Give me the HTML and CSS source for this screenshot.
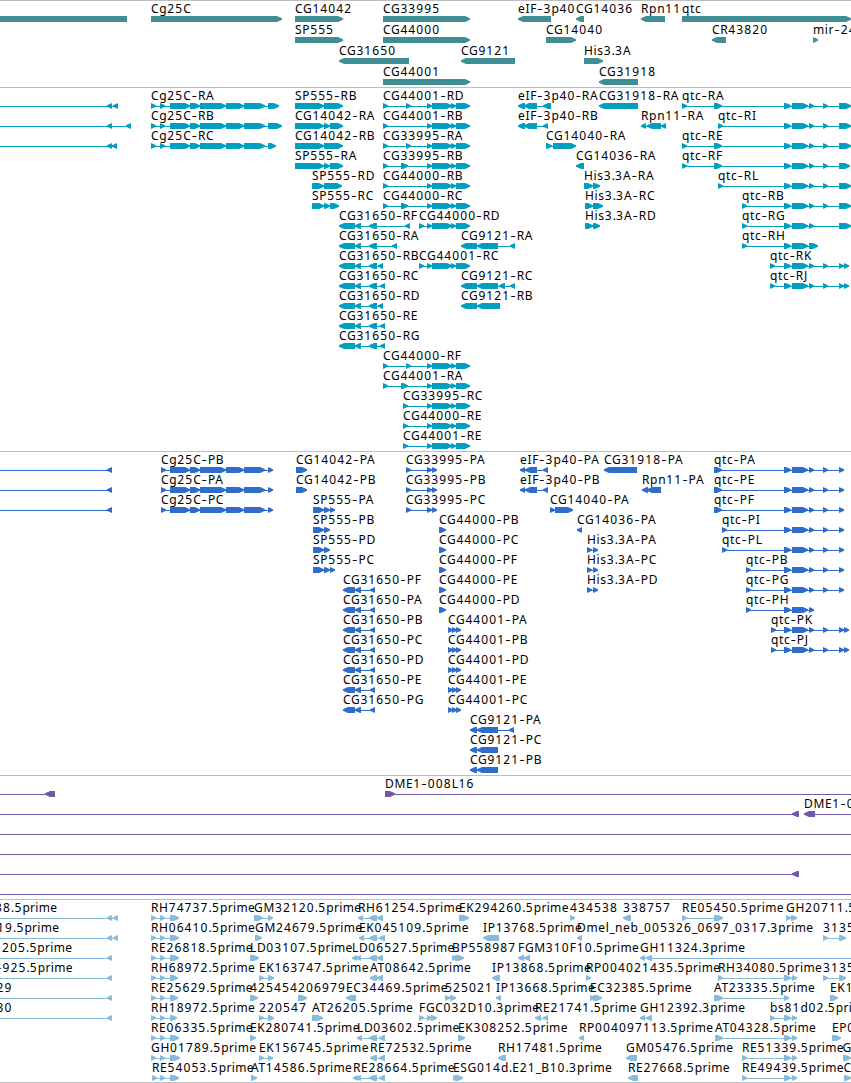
FILE: index.html
```html
<!DOCTYPE html>
<html lang="en">
<head>
    <meta charset="UTF-8">
    <meta name="viewport" content="width=device-width, initial-scale=1.0">
    <title>Genome tracks</title>
    <link rel="stylesheet" href="styles.css">
</head>
<body>
    <main class="browser">
        <section class="track genes" id="genes"></section>
        <section class="track transcripts" id="transcripts"></section>
        <section class="track proteins" id="proteins"></section>
        <section class="track bacs" id="bacs"></section>
        <section class="track ests" id="ests"></section>
    </main>
    <script src="tracks.js"></script>
</body>
</html>
```
FILE: styles.css
```css
body {
    margin: 0;
    background-color: #fff;
    overflow: hidden;
}
.browser {
    display: flex;
    flex-direction: column;
    border-bottom: 1px solid #bdbdbd;
}
.track {
    border-top: 1px solid #bdbdbd;
    box-sizing: border-box;
    overflow: hidden;
}
.track svg {
    display: block;
    width: 100%;
    height: 100%;
}
.genes {
    height: 87px;
    color: #3f8e94;
}
.transcripts {
    height: 364px;
    color: #009fc0;
}
.proteins {
    height: 324px;
    color: #306ccb;
}
.bacs {
    height: 124px;
    color: #7459a8;
}
.ests {
    height: 183px;
    color: #86bbdc;
}
.exon,
.intron {
    fill: currentColor;
}
.label {
    font-family: "Noto Sans", sans-serif;
    font-size: 12px;
    letter-spacing: 0.65px;
    fill: #000;
}
.label .num {
    letter-spacing: 1.12px;
}
.label .dash {
    font-family: Inter, "Noto Sans", sans-serif;
    letter-spacing: 0.9px;
}
.label .punct {
    letter-spacing: 0.2px;
}
.label .end {
    letter-spacing: 0.32px;
}
```
FILE: tracks.js
```javascript
// feature: [lane, label, strand, exons, line span, label x]
const cgBody = ' 427:432 432:452 451:456 456:470';
const cg31650 = '339:355 355:361 369:377 ';
const cg25c = ' 170:190 190:200 200:226 226:244 244:265 ';
const qtcMid = ' 784:791 792:808 809:814 ';
const qtcEnd = qtcMid + '823:828 839:851';
const qtcProt = qtcMid + '823:828 839:844';
const qtcLast = qtcMid + '823:828 839:844 844:849';
const estQtc = ' 784:791 792:797';

const genes = [
    [0, '', '-', '-20:127'],
    [0, 'Cg25C', '+', '151:282'],
    [0, 'CG14042', '+', '295:343'],
    [0, 'CG33995', '+', '383:470'],
    [0, 'eIF-3p40', '-', '518:551'],
    [0, 'CG14036', '-', '576:584'],
    [0, 'Rpn11', '-', '641:665'],
    [0, 'qtc', '+', '682:851'],
    [1, 'SP555', '+', '295:343'],
    [1, 'CG44000', '+', '383:470'],
    [1, 'CG14040', '+', '546:576'],
    [1, 'CR43820', '-', '712:726'],
    [1, 'mir-24', '+', '813:818'],
    [2, 'CG31650', '-', '339:409'],
    [2, 'CG9121', '-', '461:515'],
    [2, 'His3.3A', '+', '584:603'],
    [3, 'CG44001', '+', '383:470'],
    [3, 'CG31918', '-', '599:638']
];

const transcripts = [
    [0, '', '-', '107:112 113:118', [0, 118]],
    [1, '', '-', '107:112 126:131', [0, 131]],
    [2, '', '-', '107:112 112:117', [0, 117]],
    [0, 'Cg25C-RA', '+', '151:156 160:165' + cg25c + '268:279'],
    [1, 'Cg25C-RB', '+', '151:156 160:165' + cg25c + '268:282'],
    [2, 'Cg25C-RC', '+', '151:156 160:165' + cg25c + '268:276'],
    [0, 'SP555-RB', '+', '295:324 324:343'],
    [1, 'CG14042-RA', '+', '295:324 324:330 330:343'],
    [2, 'CG14042-RB', '+', '295:324 324:343'],
    [3, 'SP555-RA', '+', '295:324 324:330 330:343'],
    [4, 'SP555-RD', '+', '312:324 324:342'],
    [5, 'SP555-RC', '+', '312:324 324:330 330:339'],
    [0, 'CG44001-RD', '+', '383:388 406:411' + cgBody],
    [1, 'CG44001-RB', '+', '383:388' + cgBody],
    [2, 'CG33995-RA', '+', '383:388 406:411' + cgBody],
    [3, 'CG33995-RB', '+', '383:388 401:408' + cgBody],
    [4, 'CG44000-RB', '+', '383:388' + cgBody],
    [5, 'CG44000-RC', '+', '383:388 401:408' + cgBody],
    [6, 'CG31650-RF', '-', cg31650 + '405:410'],
    [7, 'CG31650-RA', '-', cg31650 + '392:397'],
    [8, 'CG31650-RB', '-', cg31650 + '378:383'],
    [9, 'CG31650-RC', '-', cg31650 + '380:385'],
    [10, 'CG31650-RD', '-', cg31650 + '378:383'],
    [11, 'CG31650-RE', '-', cg31650 + '380:385'],
    [12, 'CG31650-RG', '-', cg31650 + '380:385'],
    [6, 'CG44000-RD', '+', '419:424' + cgBody],
    [8, 'CG44001-RC', '+', '419:424' + cgBody],
    [7, 'CG9121-RA', '-', '461:477 477:498 510:515'],
    [9, 'CG9121-RC', '-', '461:477 477:498 499:505 510:515'],
    [10, 'CG9121-RB', '-', '461:477 477:500'],
    [13, 'CG44000-RF', '+', '383:388 406:411' + cgBody],
    [14, 'CG44001-RA', '+', '383:388 401:408' + cgBody],
    [15, 'CG33995-RC', '+', '403:408' + cgBody],
    [16, 'CG44000-RE', '+', '403:408' + cgBody],
    [17, 'CG44001-RE', '+', '403:408' + cgBody],
    [0, 'eIF-3p40-RA', '-', '518:525 524:537 543:551'],
    [1, 'eIF-3p40-RB', '-', '518:525 524:537 543:548'],
    [0, 'CG31918-RA', '-', '599:638'],
    [1, 'Rpn11-RA', '-', '641:646 647:661 661:666'],
    [2, 'CG14040-RA', '+', '546:552 553:576'],
    [3, 'CG14036-RA', '-', '576:584'],
    [4, 'His3.3A-RA', '+', '584:593 593:600'],
    [5, 'His3.3A-RC', '+', '585:593 593:603'],
    [6, 'His3.3A-RD', '+', '585:593 593:600'],
    [0, 'qtc-RA', '+', '682:687 714:722' + qtcEnd],
    [1, 'qtc-RI', '+', '718:723' + qtcEnd],
    [2, 'qtc-RE', '+', '682:687 714:722' + qtcEnd],
    [3, 'qtc-RF', '+', '682:687 714:722' + qtcMid + '823:828 839:850'],
    [4, 'qtc-RL', '+', '718:723' + qtcEnd],
    [5, 'qtc-RB', '+', '742:747' + qtcEnd],
    [6, 'qtc-RG', '+', '742:747' + qtcMid + '839:851'],
    [7, 'qtc-RH', '+', '742:747 784:791 792:808 809:818'],
    [8, 'qtc-RK', '+', '770:775' + qtcLast],
    [9, 'qtc-RJ', '+', '770:775' + qtcLast]
];

const proteins = [
    [0, '', '-', '107:112', [0, 112]],
    [1, '', '-', '107:112', [0, 112]],
    [2, '', '-', '107:112', [0, 112]],
    [0, 'CG14042-PA', '+', '296:307'],
    [1, 'CG14042-PB', '+', '296:307'],
    [2, 'SP555-PA', '+', '313:324 324:330 330:335'],
    [3, 'SP555-PB', '+', '313:324 324:330'],
    [4, 'SP555-PD', '+', '313:324 324:330'],
    [5, 'SP555-PC', '+', '313:324 324:330 330:335'],
    [13, 'CG9121-PA', '-', '470:477 477:498 509:514'],
    [14, 'CG9121-PC', '-', '470:477 477:498'],
    [15, 'CG9121-PB', '-', '470:477 477:498'],
    [0, 'eIF-3p40-PA', '-', '520:525 525:537 543:548'],
    [1, 'eIF-3p40-PB', '-', '520:525 525:537 543:548'],
    [0, 'CG31918-PA', '-', '604:637'],
    [1, 'Rpn11-PA', '-', '642:648 647:661'],
    [2, 'CG14040-PA', '+', '550:555 555:573'],
    [3, 'CG14036-PA', '-', '577:582'],
    [4, 'His3.3A-PA', '+', '587:592 593:598'],
    [5, 'His3.3A-PC', '+', '587:592 593:598'],
    [6, 'His3.3A-PD', '+', '587:592 593:598'],
    [0, 'qtc-PA', '+', '714:722' + qtcProt],
    [1, 'qtc-PE', '+', '714:722' + qtcProt],
    [2, 'qtc-PF', '+', '714:722' + qtcProt],
    [3, 'qtc-PI', '+', '722:727' + qtcProt],
    [4, 'qtc-PL', '+', '722:727' + qtcProt],
    [5, 'qtc-PB', '+', '746:751' + qtcProt],
    [6, 'qtc-PG', '+', '746:751' + qtcProt],
    [7, 'qtc-PH', '+', '746:751 784:791 792:808 809:814'],
    [8, 'qtc-PK', '+', '771:776' + qtcLast],
    [9, 'qtc-PJ', '+', '771:776' + qtcLast]
];
// isoforms that share one structure
['PB', 'PA', 'PC'].forEach((p, i) => proteins.push([i, 'Cg25C-' + p, '+', '161:166' + cg25c + '268:273']));
['PA', 'PB', 'PC'].forEach((p, i) => proteins.push([i, 'CG33995-' + p, '+', '406:411 427:432 432:437']));
['PF', 'PA', 'PB', 'PC', 'PD', 'PE', 'PG'].forEach((p, i) => proteins.push([i + 6, 'CG31650-' + p, '-', '343:355 355:361 370:375']));
['PB', 'PC', 'PF', 'PE', 'PD'].forEach((p, i) => proteins.push([i + 3, 'CG44000-' + p, '+', '439:446']));
['PA', 'PB', 'PD', 'PE', 'PC'].forEach((p, i) => proteins.push([i + 8, 'CG44001-' + p, '+', '448:453 452:457 456:461']));

const bacs = [
    [0, '', '-', '45:55', [0, 55]],
    [0, 'DME1-008L16', '+', '385:395', [385, 851]],
    [1, '', '-', '792:799', [0, 799]],
    [1, 'DME1-0', '-', '804:815', [804, 851]],
    [2, '', '+', '', [0, 851]],
    [3, '', '+', '', [0, 851]],
    [4, '', '-', '792:799', [0, 799]],
    [5, '', '+', '', [0, 851]]
];

const ests = [
    [0, '38.5prime', '-', '107:112 113:118', [0, 118], -5],
    [1, '19.5prime', '-', '107:112 113:118', [0, 118], -3],
    [2, '205.5prime', '-', '107:112', [0, 112], 2],
    [3, '-925.5prime', '-', '107:112', [0, 112], -4],
    [4, '29', '-', '107:112', [0, 112], -3.5],
    [5, '30', '-', '107:112', [0, 112], -3.5],
    [0, 'RH74737.5prime', '+', '151:156 160:165 170:179'],
    [1, 'RH06410.5prime', '+', '151:156 160:165 170:179'],
    [2, 'RE26818.5prime', '+', '151:156 160:165 170:179'],
    [3, 'RH68972.5prime', '+', '151:156 160:165 170:178'],
    [4, 'RE25629.5prime', '+', '151:156 160:165 170:178'],
    [5, 'RH18972.5prime', '+', '151:156 160:165 170:177'],
    [6, 'RE06335.5prime', '+', '151:156 160:165 170:179'],
    [7, 'GH01789.5prime', '+', '151:156 160:165 170:180'],
    [8, 'RE54053.5prime', '+', '152:157 160:165 170:179'],
    [0, 'GM32120.5prime', '+', '254:263 268:273'],
    [1, 'GM24679.5prime', '+', '255:262'],
    [2, 'LD03107.5prime', '+', '250:259'],
    [3, 'EK163747.5prime', '+', '259:264 268:274'],
    [4, '425454', '+', '250:258'],
    [4, '206979', '+', '298:307'],
    [5, '220547', '+', '259:264 268:274'],
    [6, 'EK280741.5prime', '+', '250:256'],
    [7, 'EK156745.5prime', '+', '259:264 268:273'],
    [8, 'AT14586.5prime', '+', '251:257'],
    [0, 'RH61254.5prime', '-', '358:363 369:377 377:383'],
    [1, 'EK045109.5prime', '-', '359:364 369:377 379:385'],
    [2, 'LD06527.5prime', '-', '352:357 356:361 369:377 377:383'],
    [3, 'AT08642.5prime', '-', '370:377 377:383'],
    [4, 'EC34469.5prime', '-', '346:356'],
    [5, 'AT26205.5prime', '+', '312:323'],
    [6, 'LD03602.5prime', '-', '357:362 369:377 379:385'],
    [7, 'RE72532.5prime', '-', '370:377 379:385'],
    [8, 'RE28664.5prime', '-', '353:358 356:361 369:377 379:385'],
    [0, 'EK294260.5prime', '+', '459:469'],
    [1, 'IP13768.5prime', '-', '483:499'],
    [2, 'BP558987', '+', '452:457 455:464'],
    [2, 'FGM310F10.5prime', '-', '518:524 524:530'],
    [3, 'IP13868.5prime', '-', '492:500'],
    [4, '525021', '+', '445:450 450:456'],
    [4, 'IP13668.5prime', '-', '496:501'],
    [5, 'FGC032D10.3prime', '+', '419:424 427:432 431:437'],
    [5, 'RE21741.5prime', '-', '535:541 543:548'],
    [6, 'EK308252.5prime', '+', '458:465'],
    [7, 'RH17481.5prime', '-', '498:506'],
    [8, 'ESG014d.E21_B10.3prime', '+', '453:458 455:463'],
    [0, '434538', '+', '570:575'],
    [0, '338757', '-', '623:631'],
    [0, 'RE05450.5prime', '+', '682:687 714:723'],
    [0, 'GH20711.5', '+', '786:791 791:797'],
    [1, 'Dmel_neb_005326_0697_0317.3prime', '-', '577:582'],
    [1, '3135', '+', '823:828 839:846'],
    [2, 'GH11324.3prime', '-', '640:645 646:652', [640, 851]],
    [3, 'RP004021435.5prime', '+', '586:591'],
    [3, 'RH34080.5prime', '+', '718:723' + estQtc],
    [3, '3135', '+', '823:828 839:846'],
    [4, 'EC32385.5prime', '+', '590:595 593:602'],
    [4, 'AT23335.5prime', '+', '714:723 784:789'],
    [4, 'EK1', '+', '830:838'],
    [5, 'GH12392.3prime', '-', '640:645 646:652'],
    [5, 'bs81d02.5prime', '+', '770:775' + estQtc],
    [6, 'RP004097113.5prime', '-', '579:584'],
    [6, 'AT04328.5prime', '+', '715:723' + estQtc],
    [6, 'EP0', '+', '832:841'],
    [7, 'GM05476.5prime', '-', '626:637'],
    [7, 'RE51339.5prime', '+', '742:747' + estQtc],
    [7, 'G', '+', '843:851', null, 842.5],
    [8, 'RE27668.5prime', '-', '628:638'],
    [8, 'RE49439.5prime', '+', '742:747' + estQtc],
    [8, 'C', '+', '844:851', null, 843.5]
];

function exonShape(x1, x2, y, strand) {
    const head = Math.min(5, x2 - x1);
    if (strand === '+') {
        return `<polygon class="exon" points="${x1},${y} ${x2 - head},${y} ${x2},${y + 2.3} ${x2},${y + 3.7} ${x2 - head},${y + 6} ${x1},${y + 6}"/>`;
    }
    return `<polygon class="exon" points="${x2},${y} ${x1 + head},${y} ${x1},${y + 2.3} ${x1},${y + 3.7} ${x1 + head},${y + 6} ${x2},${y + 6}"/>`;
}

// digits, dashes and the read suffix are spaced differently from the letters
function labelText(label) {
    return label.replace(/prime|[0-9]+|-|[._]/g, part => {
        let cls = 'num';
        if (part === 'prime') cls = 'end';
        else if (part === '-') cls = 'dash';
        else if (part === '.' || part === '_') cls = 'punct';
        return `<tspan class="${cls}">${part}</tspan>`;
    });
}

function drawTrack(id, features, laneHeight) {
    let svg = '';
    for (const [lane, label, strand, exonList, span, labelX] of features) {
        const y = 15 + lane * laneHeight;
        const exons = exonList ? exonList.split(' ').map(e => e.split(':').map(Number)) : [];
        const from = span ? span[0] : exons[0][0];
        const to = span ? span[1] : exons[exons.length - 1][1];
        if (span || exons.length > 1) {
            // stop short of the outer tips
            const x1 = strand === '-' && from > 0 ? from + 2 : from;
            const x2 = strand === '+' && to < 851 ? to - 2 : to;
            svg += `<rect class="intron" x="${x1}" y="${y + 3}" width="${x2 - x1}" height="1"/>`;
        }
        for (const [x1, x2] of exons) {
            svg += exonShape(x1, x2, y, strand);
        }
        if (label) {
            svg += `<text class="label" x="${labelX === undefined ? from : labelX}" y="${y - 3}">${labelText(label)}</text>`;
        }
    }
    document.getElementById(id).innerHTML = `<svg>${svg}</svg>`;
}

drawTrack('genes', genes, 21);
drawTrack('transcripts', transcripts, 20);
drawTrack('proteins', proteins, 20);
drawTrack('bacs', bacs, 20);
drawTrack('ests', ests, 20);
```
